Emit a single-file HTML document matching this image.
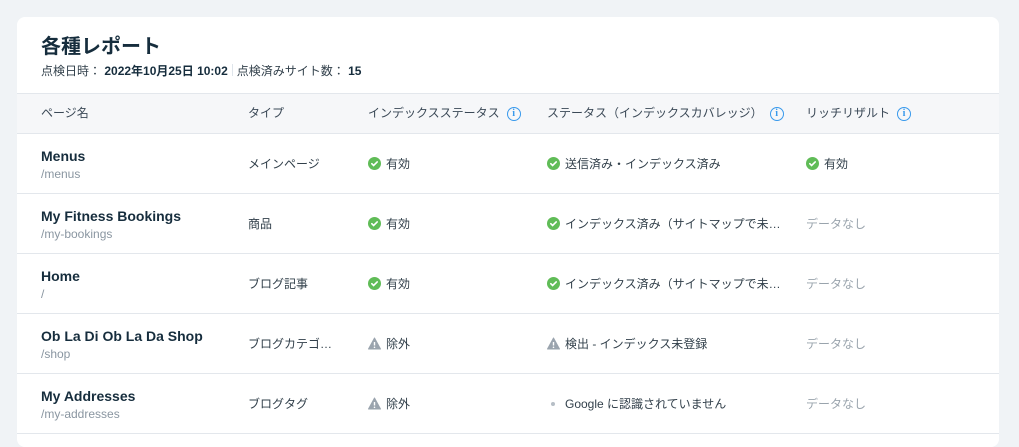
<!DOCTYPE html>
<html><head><meta charset="utf-8"><style>
*{margin:0;padding:0;box-sizing:border-box}
body{width:1019px;height:432px;overflow:hidden;background:#f0f3f6;font-family:"Liberation Sans","Noto Sans CJK JP",sans-serif;color:#20303c}
.card{position:absolute;left:17px;top:17px;width:982px;height:430px;background:#fff;border-radius:8px;overflow:hidden}
h1{position:absolute;left:24px;top:13px;font-size:20px;font-weight:bold;color:#162d3d}
.sub{position:absolute;left:24px;top:45px;font-size:12px;color:#32404b;white-space:nowrap}
.sub b{color:#162d3d}
.sep{display:inline-block;width:1px;height:12px;background:#dfe5eb;margin:0 4px;vertical-align:-1px}
.hdr{position:absolute;left:0;top:76px;width:982px;height:41px;background:#f6f7f9;border-top:1px solid #e3e7ec;border-bottom:1px solid #e3e7ec;font-size:12px;color:#3b4957}
.c{position:absolute;white-space:nowrap}
.hdr .c{top:11px;line-height:16px}
.row{position:absolute;left:0;width:982px;height:60px;border-bottom:1px solid #e3e7ec;font-size:12px}
.nm{left:24px;top:14px;font-weight:bold;font-size:14px;color:#162d3d}
.pt{left:24px;top:33px;font-size:12px;color:#8a96a1}
.v{top:21px;color:#32404b}
.g{color:#9aa4ad}
.ic{display:inline-block;width:13px;height:13px;vertical-align:-2px;margin-right:5px}
.info{display:inline-block;width:14px;height:14px;border:1.3px solid #3899ec;border-radius:50%;color:#3899ec;font-size:10px;font-weight:bold;text-align:center;line-height:12px;margin-left:7px;vertical-align:top;margin-top:2px;font-family:"Liberation Serif",serif}
</style></head><body>
<div class="card">
<h1>各種レポート</h1>
<div class="sub">点検日時： <b>2022年10月25日 10:02</b><span class="sep"></span>点検済みサイト数： <b>15</b></div>
<div class="hdr">
<div class="c" style="left:24px">ページ名</div>
<div class="c" style="left:231px">タイプ</div>
<div class="c" style="left:351px">インデックスステータス<span class="info">i</span></div>
<div class="c" style="left:530px">ステータス（インデックスカバレッジ）<span class="info">i</span></div>
<div class="c" style="left:789px">リッチリザルト<span class="info">i</span></div>
</div>
<svg width="0" height="0" style="position:absolute"><defs>
<symbol id="ok" viewBox="0 0 13 13"><circle cx="6.5" cy="6.5" r="6.5" fill="#60bc57"/><path d="M3.8 6.7l1.8 1.8 3.6-3.6" stroke="#fff" stroke-width="1.6" fill="none" stroke-linecap="round"/></symbol>
<symbol id="wr" viewBox="0 0 13 13"><path d="M6.5 1L12.5 12H0.5Z" fill="#9aa4ae" stroke="#9aa4ae" stroke-linejoin="round"/><path d="M6.5 5v3.5" stroke="#fff" stroke-width="1.4"/><circle cx="6.5" cy="10.3" r=".8" fill="#fff"/></symbol>
</defs></svg>
<div class="row" style="top:117px">
<div class="c nm">Menus</div><div class="c pt">/menus</div>
<div class="c v" style="left:231px">メインページ</div>
<div class="c v" style="left:351px"><svg class="ic"><use href="#ok"/></svg>有効</div>
<div class="c v" style="left:530px"><svg class="ic"><use href="#ok"/></svg>送信済み・インデックス済み</div>
<div class="c v" style="left:789px"><svg class="ic"><use href="#ok"/></svg>有効</div>
</div>
<div class="row" style="top:177px">
<div class="c nm">My Fitness Bookings</div><div class="c pt">/my-bookings</div>
<div class="c v" style="left:231px">商品</div>
<div class="c v" style="left:351px"><svg class="ic"><use href="#ok"/></svg>有効</div>
<div class="c v" style="left:530px"><svg class="ic"><use href="#ok"/></svg>インデックス済み（サイトマップで未…</div>
<div class="c v g" style="left:789px">データなし</div>
</div>
<div class="row" style="top:237px">
<div class="c nm">Home</div><div class="c pt">/</div>
<div class="c v" style="left:231px">ブログ記事</div>
<div class="c v" style="left:351px"><svg class="ic"><use href="#ok"/></svg>有効</div>
<div class="c v" style="left:530px"><svg class="ic"><use href="#ok"/></svg>インデックス済み（サイトマップで未…</div>
<div class="c v g" style="left:789px">データなし</div>
</div>
<div class="row" style="top:297px">
<div class="c nm">Ob La Di Ob La Da Shop</div><div class="c pt">/shop</div>
<div class="c v" style="left:231px">ブログカテゴ…</div>
<div class="c v" style="left:351px"><svg class="ic"><use href="#wr"/></svg>除外</div>
<div class="c v" style="left:530px"><svg class="ic"><use href="#wr"/></svg>検出 - インデックス未登録</div>
<div class="c v g" style="left:789px">データなし</div>
</div>
<div class="row" style="top:357px">
<div class="c nm">My Addresses</div><div class="c pt">/my-addresses</div>
<div class="c v" style="left:231px">ブログタグ</div>
<div class="c v" style="left:351px"><svg class="ic"><use href="#wr"/></svg>除外</div>
<div class="c v" style="left:530px"><span style="display:inline-block;width:4px;height:4px;border-radius:50%;background:#b6bec6;margin:0 10px 2px 4px"></span>Google に認識されていません</div>
<div class="c v g" style="left:789px">データなし</div>
</div>
</div>
</body></html>
